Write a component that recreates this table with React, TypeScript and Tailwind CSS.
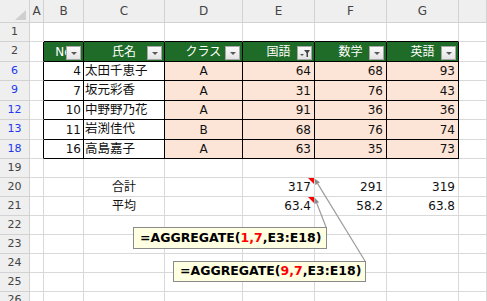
const FONT = "font-['DejaVu_Sans','Noto_Sans_CJK_JP',sans-serif]";

const GRID = 'border-r border-b border-[#d9d9d9]';
const HEAD = 'border-r border-b border-[#d2d2d2] bg-[#efefef] text-[#444] flex items-center justify-center';
const TBL = 'border-r border-b border-black';

type Row = { r: number; no: number; name: string; cls: string; e: number; f: number; g: number };

const rows: Row[] = [
  { r: 6, no: 4, name: '太田千恵子', cls: 'A', e: 64, f: 68, g: 93 },
  { r: 9, no: 7, name: '坂元彩香', cls: 'A', e: 31, f: 76, g: 43 },
  { r: 12, no: 10, name: '中野野乃花', cls: 'A', e: 91, f: 36, g: 36 },
  { r: 13, no: 11, name: '岩渕佳代', cls: 'B', e: 68, f: 76, g: 74 },
  { r: 18, no: 16, name: '高島嘉子', cls: 'A', e: 63, f: 35, g: 73 },
];

function RowHead({ n, blue }: { n: number; blue?: boolean }) {
  return (
    <div className={`${HEAD} text-[11px] ${blue ? 'text-[#2038ee]' : ''}`}>{n}</div>
  );
}

function FilterButton({ active }: { active?: boolean }) {
  return (
    <div className="absolute right-[2px] top-[4px] flex h-[14px] w-[15px] items-center justify-center border border-[#a6a6a6] bg-gradient-to-b from-[#fafafa] to-[#e4e4e4]">
      {active ? (
        <svg width="12" height="10" viewBox="0 0 12 10">
          <polygon points="1,6 5,6 3,8" fill="#555" />
          <polygon points="5,2 11,2 9,5 9,9 7.5,9 7.5,5" fill="#444" />
        </svg>
      ) : (
        <svg width="8" height="5" viewBox="0 0 8 5">
          <polygon points="1,1 7,1 4,4" fill="#595959" />
        </svg>
      )}
    </div>
  );
}

function HeaderCell({ label, active }: { label: string; active?: boolean }) {
  return (
    <div className={`${TBL} relative flex items-center justify-center overflow-hidden bg-[#1f6b28] text-[12px] text-white`}>
      <span>{label}</span>
      <FilterButton active={active} />
    </div>
  );
}

function Leader({ x1, y1, x2, y2 }: { x1: number; y1: number; x2: number; y2: number }) {
  const len = Math.hypot(x2 - x1, y2 - y1);
  const ux = (x2 - x1) / len;
  const uy = (y2 - y1) / len;
  const bx = x2 - ux * 6;
  const by = y2 - uy * 6;
  const px = -uy * 2.6;
  const py = ux * 2.6;
  return (
    <g>
      <line x1={x1} y1={y1} x2={bx} y2={by} stroke="#9c9c9c" strokeWidth={1.2} />
      <polygon points={`${x2},${y2} ${bx + px},${by + py} ${bx - px},${by - py}`} fill="#8c8c8c" />
    </g>
  );
}

function Formula({ a, b }: { a: string; b: string }) {
  return (
    <span>
      =AGGREGATE(<span className="text-[#ff0000]">{a},{b}</span>,E3:E18)
    </span>
  );
}

export default function App() {
  const blank = (k: string) => <div key={k} className={GRID} />;

  return (
    <div className={`relative h-[301px] w-[487px] overflow-hidden bg-white ${FONT} text-[12px] text-[#111]`}>
      <div className="grid h-full grid-cols-[30px_14px_40px_81px_78px_72px_72px_72px_1fr] grid-rows-[23px_19px_20px_19px_20px_19px_20px_19px_19px_19px_19px_19px_19px_19px_19px_1fr]">
        {/* column letters */}
        <div className={`${HEAD} relative`}>
          <svg className="absolute right-[3px] bottom-[2px]" width="11" height="10" viewBox="0 0 11 10">
            <polygon points="11,0 11,10 0,10" fill="#cfcfcf" />
          </svg>
        </div>
        {['A', 'B', 'C', 'D', 'E', 'F', 'G', ''].map((c, i) => (
          <div key={i} className={`${HEAD} text-[12px]`}>{c}</div>
        ))}

        {/* row 1 */}
        <RowHead n={1} />
        {blank('1a')}
        {[0, 1, 2, 3, 4, 5].map((i) => (
          <div key={i} className="border-r border-b border-r-[#d9d9d9] border-b-black" />
        ))}
        {blank('1h')}

        {/* row 2: table header */}
        <RowHead n={2} />
        <div className="border-r border-b border-r-black border-b-[#d9d9d9]" />
        <HeaderCell label="No" />
        <HeaderCell label="氏名" />
        <HeaderCell label="クラス" />
        <HeaderCell label="国語" active />
        <HeaderCell label="数学" />
        <HeaderCell label="英語" />
        {blank('2h')}

        {rows.map((d) => [
          <RowHead key={`${d.r}n`} n={d.r} blue />,
          <div key={`${d.r}a`} className="border-r border-b border-r-black border-b-[#d9d9d9]" />,
          <div key={`${d.r}b`} className={`${TBL} flex items-center justify-end pr-[2px]`}>{d.no}</div>,
          <div key={`${d.r}c`} className={`${TBL} flex items-center pl-[1px] text-[12.5px]`}>{d.name}</div>,
          <div key={`${d.r}d`} className={`${TBL} flex items-center justify-center bg-[#fce4d6]`}>{d.cls}</div>,
          <div key={`${d.r}e`} className={`${TBL} flex items-center justify-end bg-[#fce4d6] pr-[3px]`}>{d.e}</div>,
          <div key={`${d.r}f`} className={`${TBL} flex items-center justify-end bg-[#fce4d6] pr-[3px]`}>{d.f}</div>,
          <div key={`${d.r}g`} className={`${TBL} flex items-center justify-end bg-[#fce4d6] pr-[3px]`}>{d.g}</div>,
          blank(`${d.r}h`),
        ])}

        {/* row 19 */}
        <RowHead n={19} />
        {['a', 'b', 'c', 'd', 'e', 'f', 'g', 'h'].map((k) => blank(`19${k}`))}

        {/* totals */}
        {[
          { r: 20, label: '合計', vals: ['317', '291', '319'] },
          { r: 21, label: '平均', vals: ['63.4', '58.2', '63.8'] },
        ].map((s) => [
          <RowHead key={`${s.r}n`} n={s.r} />,
          blank(`${s.r}a`),
          blank(`${s.r}b`),
          <div key={`${s.r}c`} className={`${GRID} flex items-center justify-center`}>{s.label}</div>,
          blank(`${s.r}d`),
          ...s.vals.map((v, i) => (
            <div key={`${s.r}v${i}`} className={`${GRID} flex items-center justify-end pr-[3px]`}>{v}</div>
          )),
          blank(`${s.r}h`),
        ])}

        {[22, 23, 24, 25, 26].map((r) => [
          <RowHead key={`${r}n`} n={r} />,
          ...['a', 'b', 'c', 'd', 'e', 'f', 'g', 'h'].map((k) => blank(`${r}${k}`)),
        ])}
      </div>

      {/* comment markers and leader lines */}
      <svg className="pointer-events-none absolute left-0 top-0" width="487" height="301">
        <polygon points="308,178 314,178 314,184" fill="#ff0000" />
        <polygon points="308,197 314,197 314,203" fill="#ff0000" />
        <Leader x1={326} y1={227} x2={314.5} y2={197.5} />
        <Leader x1={365} y1={261} x2={314.5} y2={178.5} />
      </svg>

      <div className="absolute left-[133px] top-[227px] flex h-[22px] w-[194px] items-center border border-[#8a8a8a] bg-[#ffffe1] pl-[6px] text-[12.5px] font-bold text-black">
        <Formula a="1" b="7" />
      </div>
      <div className="absolute left-[173px] top-[261px] flex h-[21px] w-[193px] items-center border border-[#8a8a8a] bg-[#ffffe1] pl-[6px] text-[12.5px] font-bold text-black">
        <Formula a="9" b="7" />
      </div>
    </div>
  );
}
